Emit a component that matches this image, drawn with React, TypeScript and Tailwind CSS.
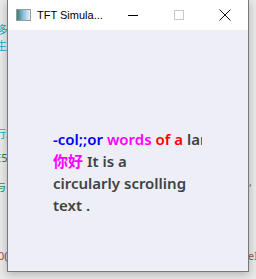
import React from "react";

export default function App() {
  return (
    <div className="relative w-[256px] h-[279px] overflow-hidden bg-[#e9e9e9]" style={{ fontFamily: '"Noto Sans", "Noto Sans CJK SC", sans-serif' }}>
      {/* desktop fragments behind window */}
      <span className="absolute left-[-3px] top-[24px] text-[11px] leading-none text-[#1aa3c8]">多<span className="text-[#c98a2a]">/</span></span>
      <span className="absolute left-[-4px] top-[40px] text-[11px] leading-none text-[#10a8c8]">生<span className="text-[#2a8a4a]">-</span></span>
      <span className="absolute left-[-5px] top-[128px] text-[11px] leading-none text-[#10b0e0]">行<span className="text-[#2a7a3a]">3</span></span>
      <span className="absolute left-[-5px] top-[152px] text-[11px] leading-none text-[#10a0c0]">E<span className="text-[#2a7a3a]">5</span></span>
      <span className="absolute left-[-5px] top-[181px] text-[11px] leading-none text-[#2a8a4a]">与</span>
      <span className="absolute left-[-2px] top-[250px] text-[11px] leading-none text-[#c04040]">0<span className="text-[#7040a0]">(</span></span>
      <span className="absolute left-[249px] top-[177px] text-[10px] leading-none text-[#208080]">,</span>
      <span className="absolute left-[248px] top-[250px] text-[11px] leading-none text-[#b05050]">e<span className="text-[#c04040]">I</span></span>

      {/* window */}
      <div className="absolute left-[7px] top-0 w-[242px] h-[272px] border border-t-0 border-[#7a7a7a] bg-[#eeeef6] shadow-[0_2px_8px_rgba(0,0,0,0.25)] flex flex-col">
        <div className="h-[30px] bg-white flex items-center shrink-0">
          <div className="ml-[8px] w-[15px] h-[12px] border border-[#9a9a9a] bg-gradient-to-r from-[#2f7f7a] via-[#8fc0e0] to-[#e8f0f8]" />
          <span className="ml-[6px] text-[11px] text-black leading-none" style={{ fontFamily: '"Liberation Sans", sans-serif' }}>TFT Simula...</span>
          <div className="ml-auto flex h-full">
            <div className="w-[46px] flex items-center justify-center">
              <div className="w-[10px] h-[1px] bg-black" />
            </div>
            <div className="w-[46px] flex items-center justify-center">
              <div className="w-[10px] h-[10px] border border-[#c8c8c8]" />
            </div>
            <div className="w-[46px] flex items-center justify-center">
              <svg width="12" height="12" viewBox="0 0 12 12">
                <path d="M0.5 0.5 L11.5 11.5 M11.5 0.5 L0.5 11.5" stroke="#111" strokeWidth="1" />
              </svg>
            </div>
          </div>
        </div>
        <div className="flex-1 pl-[45px] pt-[98px]">
          <div className="w-[149px] text-[15px] leading-[22px] font-semibold text-[#404244]">
            <div className="whitespace-nowrap overflow-hidden">
              <span className="text-[#0000ff]">-col;;or </span>
              <span className="text-[#ff00ff]">words </span>
              <span className="text-[#ff0000]">of a </span>
              <span>large</span>
            </div>
            <div>
              <span className="text-[#ff00ff]" style={{ fontFamily: '"Noto Sans CJK SC", sans-serif' }}>你好</span> It is a
            </div>
            <div>circularly scrolling</div>
            <div>text .</div>
          </div>
        </div>
      </div>
    </div>
  );
}
